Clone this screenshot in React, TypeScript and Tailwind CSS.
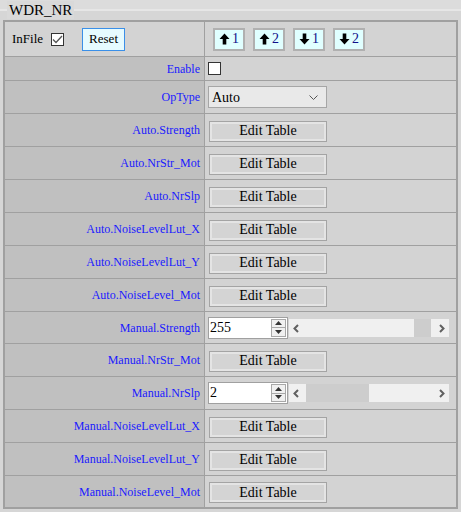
import React from 'react';

const serif = { fontFamily: '"Liberation Serif", "Times New Roman", serif' };

const Label: React.FC<{ text: string }> = ({ text }) => (
  <div className="w-[200px] shrink-0 bg-[#c0c0c0] border-r border-[#a0a0a0] flex items-center justify-end pr-[4px] text-[12px] text-[#1a1aff]">
    {text}
  </div>
);

const EditBtn = () => (
  <button className="w-[118px] h-[21px] border border-[#a4a4a4] p-[2px] bg-[#e4e4e4]" style={serif}>
    <div className="h-full w-full bg-[#d4d4d4] flex items-center justify-center text-[14px] text-black leading-none">Edit Table</div>
  </button>
);

const Arrow: React.FC<{ up: boolean }> = ({ up }) => (
  <svg width="11" height="12" viewBox="0 0 11 12" className={up ? '' : 'rotate-180'}>
    <path d="M5.5 0.5 L10.5 6 L7.3 6 L7.3 11.5 L3.7 11.5 L3.7 6 L0.5 6 Z" fill="#000" />
  </svg>
);

const MoveBtn: React.FC<{ up: boolean; n: number }> = ({ up, n }) => (
  <button className="w-[32px] h-[23px] border-2 border-[#b0b0b0] bg-[#e0ffff] flex items-center justify-center gap-[2px] text-[14px] text-[#10108a]" style={serif}>
    <Arrow up={up} />
    <span className="leading-none">{n}</span>
  </button>
);

const Spin: React.FC<{ value: string; thumbLeft: number; thumbWidth: number }> = ({ value, thumbLeft, thumbWidth }) => (
  <div className="flex items-center">
    <div className="w-[80px] h-[22px] bg-white border border-[#a0a0a0] flex items-center">
      <span className="flex-1 pl-[1px] text-[14px] text-black leading-none">{value}</span>
      <div className="w-[15px] h-[18px] mr-[1px] flex flex-col border border-[#a8a8a8] bg-[#f0f0f0]">
        <div className="flex-1 flex items-center justify-center border-b border-[#a8a8a8]">
          <svg width="7" height="4" viewBox="0 0 7 4"><path d="M3.5 0 L7 4 L0 4 Z" fill="#333" /></svg>
        </div>
        <div className="flex-1 flex items-center justify-center">
          <svg width="7" height="4" viewBox="0 0 7 4"><path d="M0 0 L7 0 L3.5 4 Z" fill="#333" /></svg>
        </div>
      </div>
    </div>
    <div className="relative ml-[1px] w-[160px] h-[18px] bg-[#f0f0f0]">
      <div className="absolute top-0 h-[18px] bg-[#cdcdcd]" style={{ left: thumbLeft, width: thumbWidth }} />
      <svg className="absolute left-[4px] top-[5px]" width="6" height="9" viewBox="0 0 6 9">
        <path d="M5 1 L1.5 4.5 L5 8" stroke="#606060" strokeWidth="2" fill="none" />
      </svg>
      <svg className="absolute right-[4px] top-[5px]" width="6" height="9" viewBox="0 0 6 9">
        <path d="M1 1 L4.5 4.5 L1 8" stroke="#606060" strokeWidth="2" fill="none" />
      </svg>
    </div>
  </div>
);

type Row = { label: string; kind: 'edit' | 'select' | 'check' | 'spin'; value?: string; thumb?: [number, number]; h?: number };

const rows: Row[] = [
  { label: 'Enable', kind: 'check', h: 24 },
  { label: 'OpType', kind: 'select' },
  { label: 'Auto.Strength', kind: 'edit' },
  { label: 'Auto.NrStr_Mot', kind: 'edit' },
  { label: 'Auto.NrSlp', kind: 'edit' },
  { label: 'Auto.NoiseLevelLut_X', kind: 'edit' },
  { label: 'Auto.NoiseLevelLut_Y', kind: 'edit' },
  { label: 'Auto.NoiseLevel_Mot', kind: 'edit' },
  { label: 'Manual.Strength', kind: 'spin', value: '255', thumb: [125, 17], h: 32 },
  { label: 'Manual.NrStr_Mot', kind: 'edit' },
  { label: 'Manual.NrSlp', kind: 'spin', value: '2', thumb: [17, 63] },
  { label: 'Manual.NoiseLevelLut_X', kind: 'edit' },
  { label: 'Manual.NoiseLevelLut_Y', kind: 'edit' },
  { label: 'Manual.NoiseLevel_Mot', kind: 'edit', h: 31 },
];

const Control: React.FC<{ row: Row }> = ({ row }) => {
  if (row.kind === 'check')
    return <div className="w-[13px] h-[13px] bg-white border border-[#333]" />;
  if (row.kind === 'select')
    return (
      <div className="w-[119px] h-[22px] bg-[#e9e9e9] border border-[#a6a6a6] flex items-center justify-between pl-[3px] pr-[8px] text-[14px] text-black">
        <span>Auto</span>
        <svg width="9" height="5" viewBox="0 0 9 5"><path d="M0.5 0.5 L4.5 4.5 L8.5 0.5" stroke="#555" fill="none" /></svg>
      </div>
    );
  if (row.kind === 'spin') return <Spin value={row.value!} thumbLeft={row.thumb![0]} thumbWidth={row.thumb![1]} />;
  return <div className="pl-[1px]"><EditBtn /></div>;
};

export default function App() {
  return (
    <div className="relative w-[461px] h-[512px] bg-[#d6d6d6]" style={serif}>
      <div className="h-[11px] bg-[#dcdcdc] border-b-2 border-[#e6e6e6]" />
      <div className="absolute left-[7px] top-[1px] px-[2px] bg-[#d9d9d9] text-[15px] leading-[18px] text-black">WDR_NR</div>
      <div className="ml-[3px] mt-[9px] w-[455px] border-2 border-[#a0a0a0] bg-[#d3d3d3]">
        <div className="flex h-[35px] border-b border-[#a0a0a0]">
          <div className="w-[200px] shrink-0 border-r border-[#a0a0a0] flex items-center pl-[7px] text-[13px] text-black">
            <span>InFile</span>
            <div className="ml-[8px] w-[13px] h-[13px] bg-white border border-[#333] flex items-center justify-center">
              <svg width="11" height="9" viewBox="0 0 11 9"><path d="M1 4.5 L4 7.5 L10 1" stroke="#555" strokeWidth="1.3" fill="none" /></svg>
            </div>
            <button className="ml-[18px] w-[43px] h-[23px] border border-[#3a8fe8] bg-[#e6fbff] text-[13px] text-black" style={serif}>Reset</button>
          </div>
          <div className="flex-1 flex items-center pl-[8px] gap-[8px]">
            <MoveBtn up n={1} />
            <MoveBtn up n={2} />
            <MoveBtn up={false} n={1} />
            <MoveBtn up={false} n={2} />
          </div>
        </div>
        {rows.map((r, i) => (
          <div
            key={r.label}
            className={`flex ${i < rows.length - 1 ? 'border-b border-[#a0a0a0]' : ''}`}
            style={{ height: r.h ?? 33 }}
          >
            <Label text={r.label} />
            <div className="flex-1 flex items-center pl-[3px]">
              <Control row={r} />
            </div>
          </div>
        ))}
      </div>
    </div>
  );
}
